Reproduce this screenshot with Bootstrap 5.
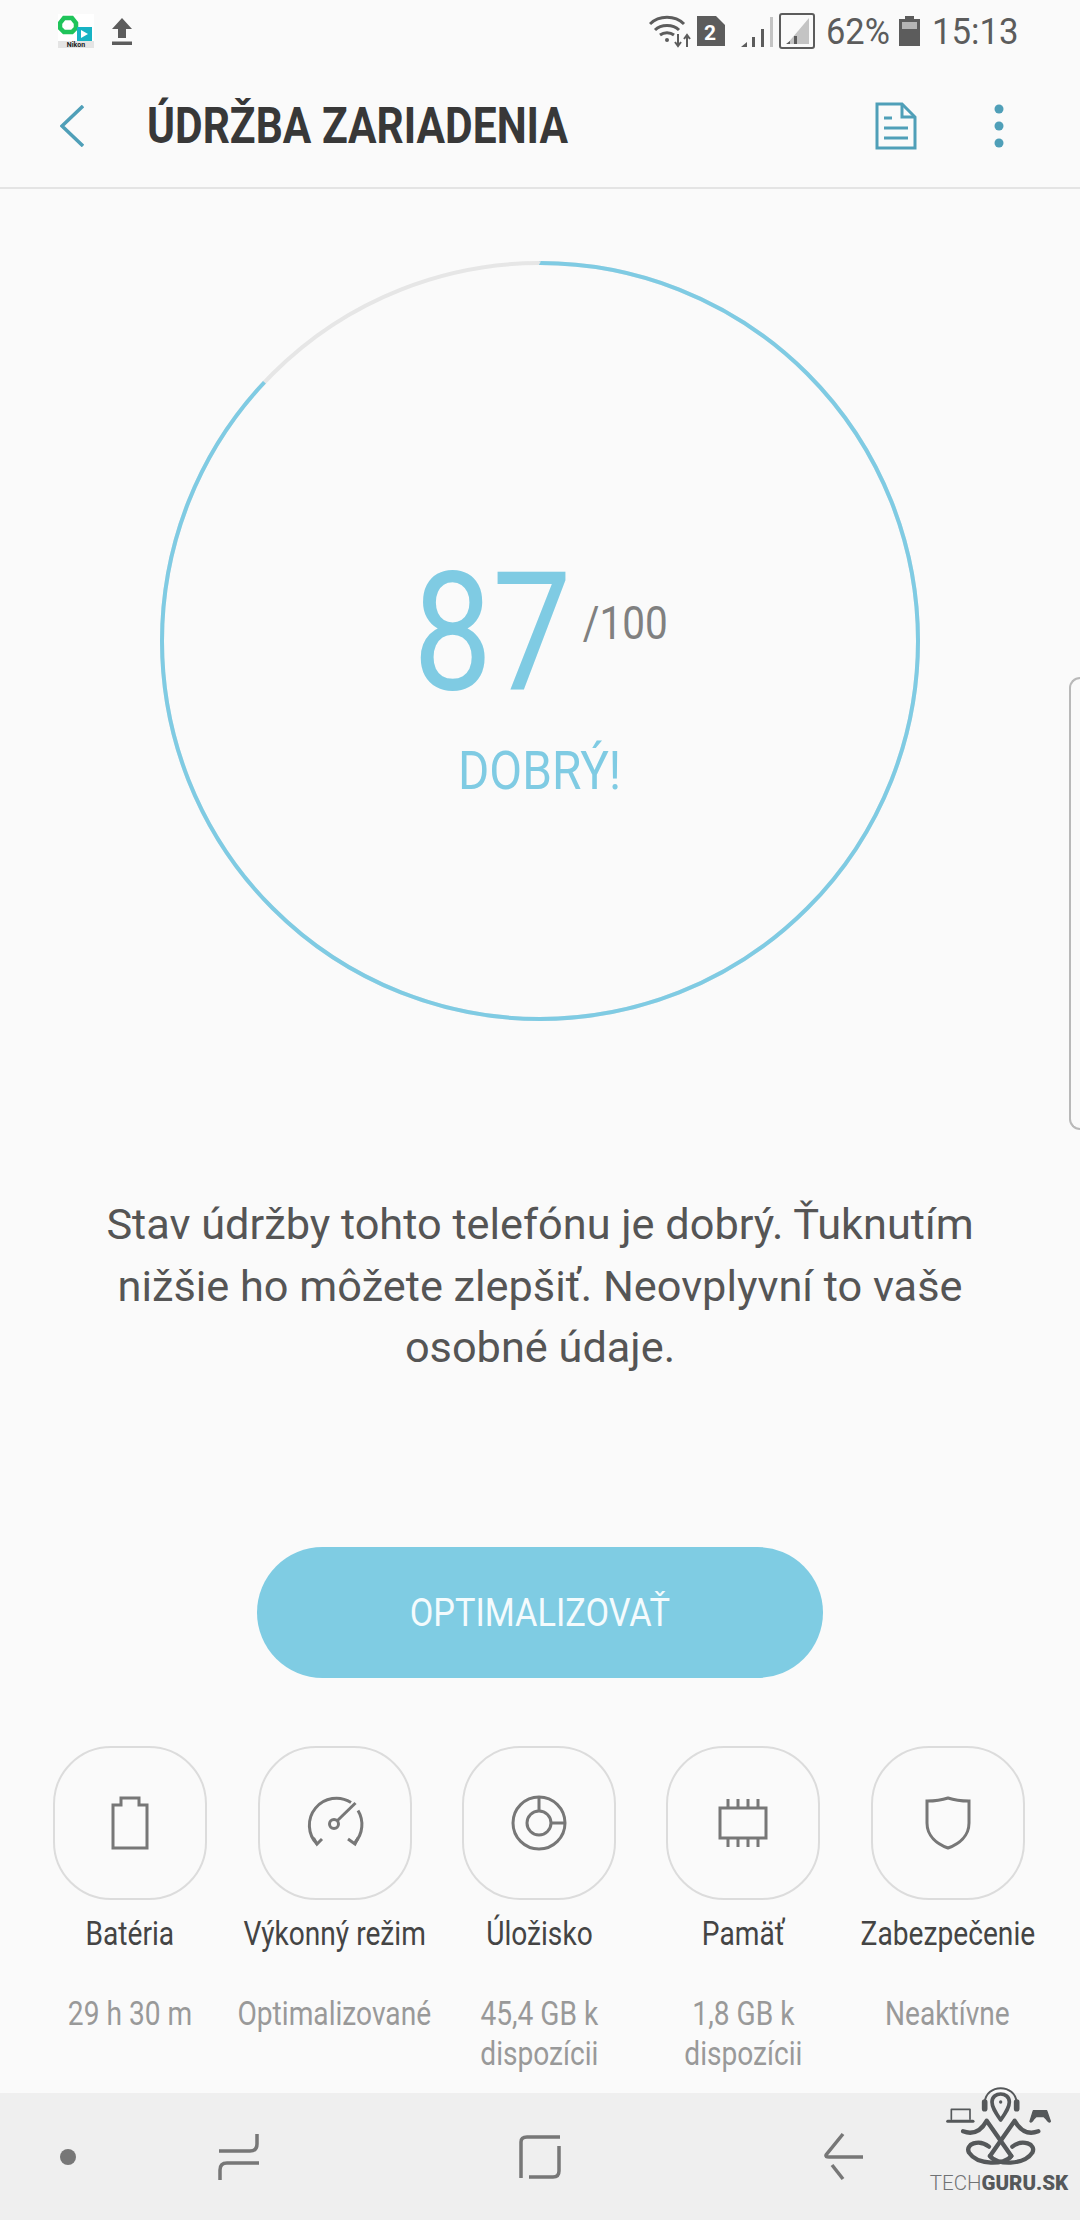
<!DOCTYPE html>
<html lang="sk">
<head>
  <meta charset="UTF-8" />
  <meta name="viewport" content="width=device-width, initial-scale=1.0" />
  <title>Údržba zariadenia</title>
  <link href="https://cdn.jsdelivr.net/npm/bootstrap@5.3.3/dist/css/bootstrap.min.css" rel="stylesheet">
  <style>
    body {
      background: #fafafa;
      font-family: Roboto, "Liberation Sans", sans-serif;
      color: #555;
    }
    .phone-page {
      width: 1080px;
      height: 2220px;
      overflow: hidden;
    }
    .squeeze {
      display: inline-block;
      white-space: nowrap;
      transform: scaleX(.84);
    }
    .status-row {
      height: 60px;
      padding: 2px 65px 0 58px;
      color: #5c5c5c;
    }
    .status-pct, .status-time {
      font-size: 37px;
      line-height: 1;
      white-space: nowrap;
      transform-origin: left center;
    }
    .status-pct { width: 60px; margin-left: 11px; transform: scaleX(.93); }
    .status-time { width: 83px; margin-left: 12px; transform: scaleX(.94); }
    .status-batt { margin-left: 13px; }
    .top-bar {
      height: 129px;
      border-bottom: 2px solid #e4e4e4;
      padding: 4px 75px 0 60px;
    }
    .top-title {
      font-size: 50px;
      font-weight: 700;
      color: #383838;
      line-height: 1;
      margin-left: 63px;
      transform: scaleX(.85);
      transform-origin: left center;
    }
    .top-dots { margin-left: 76px; }
    .ring-box {
      width: 768px;
      height: 768px;
      margin: 68px auto 0;
    }
    .score-big {
      display: inline-block;
      font-size: 166px;
      line-height: 1;
      color: #7fcbe3;
      margin: 0 -14px;
      transform: scaleX(.85);
    }
    .score-max {
      display: inline-block;
      font-size: 46px;
      line-height: 1;
      color: #808080;
      margin: 0 -6px 70px 5px;
      transform: scaleX(.88);
    }
    .score-word { font-size: 53px; line-height: 1; color: #7fcbe3; margin-top: 29px; }
    .score-word .squeeze { transform: scaleX(.9); }
    .score-stack { padding-top: 65px; }
    .state-text {
      font-size: 43.3px;
      line-height: 61.5px;
      color: #555;
      margin: 169px 0 0;
    }
    .optim-btn {
      display: block;
      width: 566px;
      height: 131px;
      margin: 168px auto 0;
      padding-top: 9px;
      background: #7fcce3;
      border: 0;
      color: #f4fbfd;
      font-size: 39px;
    }
    .optim-btn .squeeze { transform: scaleX(.88); }
    .tile-row { padding: 0 30px 0 28px; margin-top: 68px; }
    .tile-box {
      width: 154px;
      height: 154px;
      border: 2px solid #dcdcdc;
      border-radius: 58px;
    }
    .tile-name { font-size: 33.5px; line-height: 40px; color: #444; margin-top: 14px; }
    .tile-sub { font-size: 33.5px; line-height: 40px; color: #999; margin-top: 40px; }
    .bottom-keys {
      height: 127px;
      background: #efefef;
    }
    .side-handle {
      top: 677px;
      right: 0;
      width: 11px;
      height: 453px;
      border: 2px solid #b9b9b9;
      border-right: 0;
      border-radius: 12px 0 0 12px;
    }
    .mark-box { right: 8px; top: 2086px; width: 146px; }
    .mark-box svg { display: block; margin: 0 auto; }
    .mark-text { font-size: 20.5px; line-height: 1; color: #6f7274; white-space: nowrap; margin-top: 7px; font-weight: 300; }
    .mark-text b { color: #55585a; font-weight: 900; }
  </style>
</head>
<body>
  <div class="phone-page position-relative d-flex flex-column">

    <!-- status bar -->
    <div class="status-row d-flex align-items-center">
      <svg width="36" height="34" viewBox="0 0 36 34">
        <rect width="36" height="34" fill="#fff"/>
        <rect y="27" width="36" height="7" fill="#e4e4e4"/>
        <path d="M6 4h8l4 5v5l-4 4H6L2 14V9z" fill="none" stroke="#1fc45a" stroke-width="4.5"/>
        <rect x="19" y="13" width="15" height="14" fill="#17b3c4"/>
        <path d="M23 16l7 4-7 4z" fill="#fff"/>
        <text x="18" y="33" font-size="7" font-weight="700" text-anchor="middle" fill="#222">Nikon</text>
      </svg>
      <svg class="ms-3" width="24" height="28" viewBox="0 0 24 28">
        <path d="M12 1L22 12H16V21H8V12H2Z M2 24.5H22V28H2Z" fill="#5c5c5c"/>
      </svg>
      <div class="ms-auto d-flex align-items-center">
        <svg width="44" height="34" viewBox="0 0 44 34" fill="none" stroke="#5c5c5c" stroke-width="3">
          <path d="M1 10C10 1 26 1 35 10"/>
          <path d="M6 16C12 10 24 10 30 16"/>
          <path d="M11 21C15 18 21 18 25 21"/>
          <circle cx="18" cy="26" r="2" fill="#5c5c5c" stroke="none"/>
          <path d="M29 20v11m-3-3l3 4 3-4M38 33V22m-3 3l3-4 3 4" stroke-width="2"/>
        </svg>
        <div class="ms-1">
          <svg width="28" height="30" viewBox="0 0 28 30">
            <path d="M0 0H19L28 9V30H0Z" fill="#5c5c5c"/>
            <text x="13" y="24" font-size="21" font-weight="700" text-anchor="middle" fill="#fff">2</text>
          </svg>
        </div>
        <svg class="ms-3" width="34" height="32" viewBox="0 0 34 32">
          <path d="M0 32L6 27V32Z" fill="#5c5c5c"/>
          <path d="M11 22h3v10h-3zM20 14h3v18h-3z" fill="#5c5c5c"/>
          <path d="M29 2h3v30h-3z" fill="#c4c4c4"/>
        </svg>
        <svg class="ms-1" width="36" height="36" viewBox="0 0 36 36">
          <rect x="1" y="1" width="34" height="34" rx="2" fill="none" stroke="#5c5c5c" stroke-width="2"/>
          <path d="M30 5V31H8Z" fill="#c4c4c4"/>
          <path d="M7 31L11 28V31ZM15 23h3v8h-3z" fill="#5c5c5c"/>
        </svg>
        <span class="status-pct">62%</span>
        <svg class="status-batt" width="21" height="30" viewBox="0 0 21 30">
          <path d="M6 0H15V3H21V30H0V3H6Z" fill="#5c5c5c"/>
          <rect x="3" y="6" width="15" height="7" fill="#b5b5b5"/>
        </svg>
        <span class="status-time">15:13</span>
      </div>
    </div>

    <!-- title bar -->
    <div class="top-bar d-flex align-items-center">
      <svg width="24" height="42" viewBox="0 0 24 42" fill="none" stroke="#4f9fb8" stroke-width="3.5">
        <path d="M23 1L2 21L23 41"/>
      </svg>
      <span class="top-title text-nowrap">ÚDRŽBA ZARIADENIA</span>
      <svg class="ms-auto" width="42" height="48" viewBox="0 0 42 48" fill="none" stroke="#4f9fb8" stroke-width="3">
        <path d="M2 2H27L40 15V46H2Z"/>
        <path d="M27 2V15H40"/>
        <path d="M9 16H17M9 26H33M9 36H33"/>
      </svg>
      <svg class="top-dots" width="12" height="44" viewBox="0 0 12 44" fill="#4f9fb8">
        <circle cx="6" cy="5" r="4.5"/><circle cx="6" cy="22" r="4.5"/><circle cx="6" cy="39" r="4.5"/>
      </svg>
    </div>

    <!-- score ring -->
    <div class="ring-box position-relative">
      <svg width="768" height="768" viewBox="0 0 768 768" fill="none" stroke-width="4">
        <circle cx="384" cy="384" r="378" stroke="#e6e6e6"/>
        <circle cx="384" cy="384" r="378" stroke="#7fcbe3" pathLength="100" stroke-dasharray="87 13" transform="rotate(-90 384 384)"/>
      </svg>
      <div class="score-stack position-absolute top-0 start-0 w-100 h-100 d-flex flex-column align-items-center justify-content-center">
        <div class="d-flex align-items-end">
          <span class="score-big">87</span>
          <span class="score-max">/100</span>
        </div>
        <div class="score-word"><span class="squeeze">DOBRÝ!</span></div>
      </div>
    </div>

    <p class="state-text text-center">Stav údržby tohto telefónu je dobrý. Ťuknutím<br>nižšie ho môžete zlepšiť. Neovplyvní to vaše<br>osobné údaje.</p>

    <button type="button" class="optim-btn btn rounded-pill"><span class="squeeze">OPTIMALIZOVAŤ</span></button>

    <!-- maintenance tiles -->
    <div class="tile-row row row-cols-5 g-0 text-center">
      <div class="col d-flex flex-column align-items-center">
        <div class="tile-box d-flex align-items-center justify-content-center">
          <svg width="60" height="60" viewBox="0 0 60 60" fill="none" stroke="#777" stroke-width="3">
            <path d="M13 55V12H21V5H39V12H47V55Z"/>
          </svg>
        </div>
        <div class="tile-name"><span class="squeeze">Batéria</span></div>
        <div class="tile-sub"><span class="squeeze">29 h 30 m</span></div>
      </div>
      <div class="col d-flex flex-column align-items-center">
        <div class="tile-box d-flex align-items-center justify-content-center">
          <svg width="60" height="60" viewBox="0 0 60 60" fill="none" stroke="#777" stroke-width="3">
            <path d="M12 51A27 27 0 0 1 46 9.5"/>
            <path d="M53 17.5A27 27 0 0 1 50 49.5"/>
            <path d="M8.5 45L12 51L17 46M43 46L50 51L53 45"/>
            <circle cx="29" cy="31" r="4.5"/>
            <path d="M32 28L50.5 10"/>
          </svg>
        </div>
        <div class="tile-name"><span class="squeeze">Výkonný režim</span></div>
        <div class="tile-sub"><span class="squeeze">Optimalizované</span></div>
      </div>
      <div class="col d-flex flex-column align-items-center">
        <div class="tile-box d-flex align-items-center justify-content-center">
          <svg width="60" height="60" viewBox="0 0 60 60" fill="none" stroke="#777" stroke-width="3">
            <circle cx="30" cy="30" r="26"/>
            <circle cx="30" cy="30" r="12"/>
            <path d="M30 4V18M42 30H56"/>
          </svg>
        </div>
        <div class="tile-name"><span class="squeeze">Úložisko</span></div>
        <div class="tile-sub"><span class="squeeze">45,4 GB k<br>dispozícii</span></div>
      </div>
      <div class="col d-flex flex-column align-items-center">
        <div class="tile-box d-flex align-items-center justify-content-center">
          <svg width="60" height="60" viewBox="0 0 60 60" fill="none" stroke="#777" stroke-width="3">
            <rect x="7" y="15" width="46" height="30"/>
            <path d="M15 6V15M25 6V15M35 6V15M45 6V15M15 45V54M25 45V54M35 45V54M45 45V54"/>
          </svg>
        </div>
        <div class="tile-name"><span class="squeeze">Pamäť</span></div>
        <div class="tile-sub"><span class="squeeze">1,8 GB k<br>dispozícii</span></div>
      </div>
      <div class="col d-flex flex-column align-items-center">
        <div class="tile-box d-flex align-items-center justify-content-center">
          <svg width="60" height="60" viewBox="0 0 60 60" fill="none" stroke="#777" stroke-width="3">
            <path d="M9 8C17 8 24 7 30 5C36 7 43 8 51 8V30C51 43 41 51 30 55C19 51 9 43 9 30Z"/>
          </svg>
        </div>
        <div class="tile-name"><span class="squeeze">Zabezpečenie</span></div>
        <div class="tile-sub"><span class="squeeze">Neaktívne</span></div>
      </div>
    </div>

    <!-- android keys -->
    <div class="bottom-keys mt-auto">
      <svg width="900" height="127" viewBox="0 2093 900 127" fill="none" stroke="#777" stroke-width="3.5">
        <circle cx="68" cy="2157" r="8" fill="#777" stroke="none"/>
        <path d="M257 2134V2144Q257 2151 250 2151H219"/>
        <path d="M259 2163H227Q220 2163 220 2170V2180"/>
        <path d="M521 2178V2142Q521 2137 527 2137H560"/>
        <path d="M559 2146V2171Q559 2177 553 2177H529"/>
        <path d="M843 2134L826 2155Q825 2157 829 2157H863"/>
        <path d="M832 2165L843 2179"/>
      </svg>
    </div>

    <!-- edge panel handle -->
    <div class="side-handle position-absolute"></div>

    <!-- watermark -->
    <div class="mark-box position-absolute text-center">
      <svg width="110" height="80" viewBox="130 80 330 240" fill="none" stroke="#55585a" stroke-width="13" stroke-linecap="round" stroke-linejoin="round">
        <path d="M252 130C256 72 344 72 348 130" stroke-width="6"/>
        <path d="M252 128V148M348 128V148" stroke-width="17"/>
        <path d="M300 182C285 160 274 145 274 128C274 96 326 96 326 128C326 145 315 160 300 182Z" stroke-width="11"/>
        <circle cx="300" cy="128" r="5" fill="#55585a" stroke="none"/>
        <path d="M152 180V150H208V180" stroke-width="5"/>
        <path d="M141 186H217" stroke-width="9"/>
        <path d="M388 186L398 154H438L449 186Q445 192 436 178L430 172H406L400 178Q392 192 388 186Z" fill="#55585a" stroke-width="4"/>
        <path d="M187 216Q232 232 258 184L332 290"/>
        <path d="M413 216Q368 232 342 184L268 290"/>
        <path d="M332 290C312 318 230 318 205 280C192 254 235 238 265 262"/>
        <path d="M268 290C288 318 370 318 395 280C408 254 365 238 335 262"/>
      </svg>
      <div class="mark-text">TECH<b>GURU.SK</b></div>
    </div>

  </div>

  <script src="https://cdn.jsdelivr.net/npm/bootstrap@5.3.3/dist/js/bootstrap.bundle.min.js"></script>
</body>
</html>
